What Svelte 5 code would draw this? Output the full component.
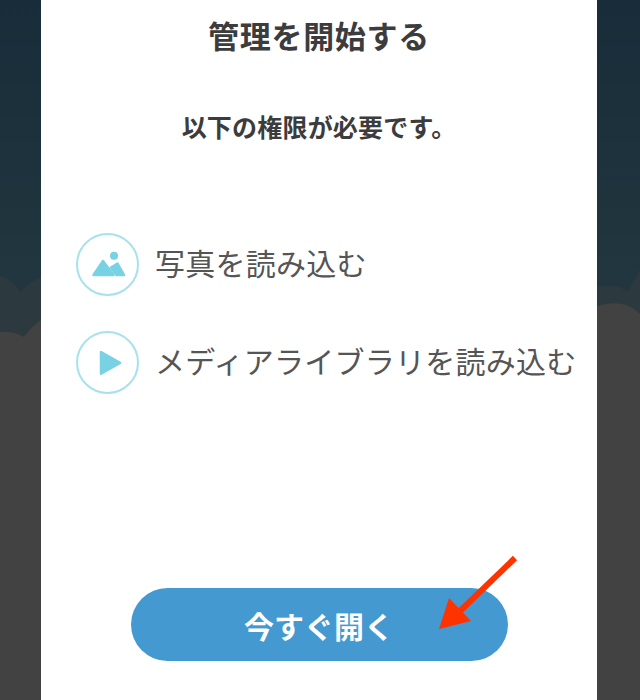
<script>
	const permissions = [
		{ id: 'photo', label: '写真を読み込む' },
		{ id: 'media', label: 'メディアライブラリを読み込む' }
	];
</script>

<main class="page">
	<svg class="clouds" viewBox="0 0 640 700" aria-hidden="true">
		<path class="far" d="M0 276 Q12 278 20 292 Q30 282 41 277 V700 H0 Z" />
		<path class="far" d="M597 287 Q615 282 628 292 Q634 280 640 270 V700 H597 Z" />
		<path class="near" d="M0 332 Q14 331 24 337 Q32 326 41 320 V700 H0 Z" />
		<path class="near" d="M597 306 Q625 298 640 314 V700 H597 Z" />
	</svg>

	<section class="card">
		<h1>管理を開始する</h1>
		<p class="lead">以下の権限が必要です。</p>

		<ul class="perms">
			{#each permissions as perm}
				<li>
					<span class="badge">
						{#if perm.id === 'photo'}
							<svg viewBox="0 0 34 34" width="34" height="34" aria-hidden="true">
								<circle cx="23" cy="7.700" r="2.800" />
								<path d="M2.500 27 L12 13 L22.500 27 Z" />
								<path d="M20 19.500 L26.500 15.500 L33 27 L25.500 27 Z" />
							</svg>
						{:else}
							<svg viewBox="0 0 34 34" width="34" height="34" aria-hidden="true">
								<path d="M10 6 L29 16.800 L10 27.600 Z" />
							</svg>
						{/if}
					</span>
					<span class="label">{perm.label}</span>
				</li>
			{/each}
		</ul>

		<button type="button">今すぐ開く</button>
	</section>

	<svg class="arrow" viewBox="0 0 120 110" width="120" height="110" aria-hidden="true">
		<line x1="95" y1="18" x2="38" y2="73" />
		<polygon points="19,89 29,58 51,81" />
	</svg>
</main>

<style>
	:global(body) {
		margin: 0;
	}

	.page {
		position: relative;
		width: 640px;
		height: 700px;
		overflow: hidden;
		box-sizing: border-box;
		padding-left: 41px;
		background: linear-gradient(#182d39 0, #1b303b 100px, #21363e 280px);
		font-family: "Noto Sans CJK JP", "Liberation Sans", sans-serif;
	}

	.clouds {
		position: absolute;
		inset: 0;
		width: 640px;
		height: 700px;
	}

	.far {
		fill: #2c3a40;
	}

	.near {
		fill: #424242;
	}

	.card {
		position: relative;
		box-sizing: border-box;
		width: 556px;
		height: 700px;
		background: #fff;
		color: #3c3c3c;
		display: flex;
		flex-direction: column;
		align-items: center;
	}

	h1 {
		margin: 13px 0 0;
		font-size: 31px;
		line-height: 44px;
		font-weight: 700;
		letter-spacing: 0.7px;
	}

	.lead {
		margin: 51px 0 0;
		font-size: 25px;
		line-height: 36px;
		font-weight: 700;
		letter-spacing: 0.2px;
	}

	.perms {
		list-style: none;
		align-self: stretch;
		margin: 89px 0 0;
		padding: 0 0 0 35px;
		display: flex;
		flex-direction: column;
		gap: 35px;
	}

	.perms li {
		display: flex;
		align-items: center;
		gap: 16px;
	}

	.badge {
		box-sizing: border-box;
		width: 63px;
		height: 63px;
		flex: none;
		border: 2px solid #a6e2ee;
		border-radius: 50%;
		display: flex;
		align-items: center;
		justify-content: center;
	}

	.badge svg {
		fill: #78d2e4;
		stroke: #78d2e4;
		stroke-width: 2.500;
		stroke-linejoin: round;
	}

	.label {
		padding-bottom: 6px;
		font-size: 30px;
		line-height: 44px;
		font-weight: 400;
		letter-spacing: 0.25px;
		white-space: nowrap;
		color: #555;
	}

	button {
		margin: 194px 0 0;
		width: 377px;
		height: 73px;
		border: none;
		border-radius: 37px;
		background: #4499d1;
		color: #fff;
		font-family: inherit;
		font-size: 30px;
		font-weight: 700;
	}

	.arrow {
		position: absolute;
		left: 420px;
		top: 540px;
	}

	.arrow line {
		stroke: #ff3300;
		stroke-width: 6;
	}

	.arrow polygon {
		fill: #ff3300;
	}
</style>
